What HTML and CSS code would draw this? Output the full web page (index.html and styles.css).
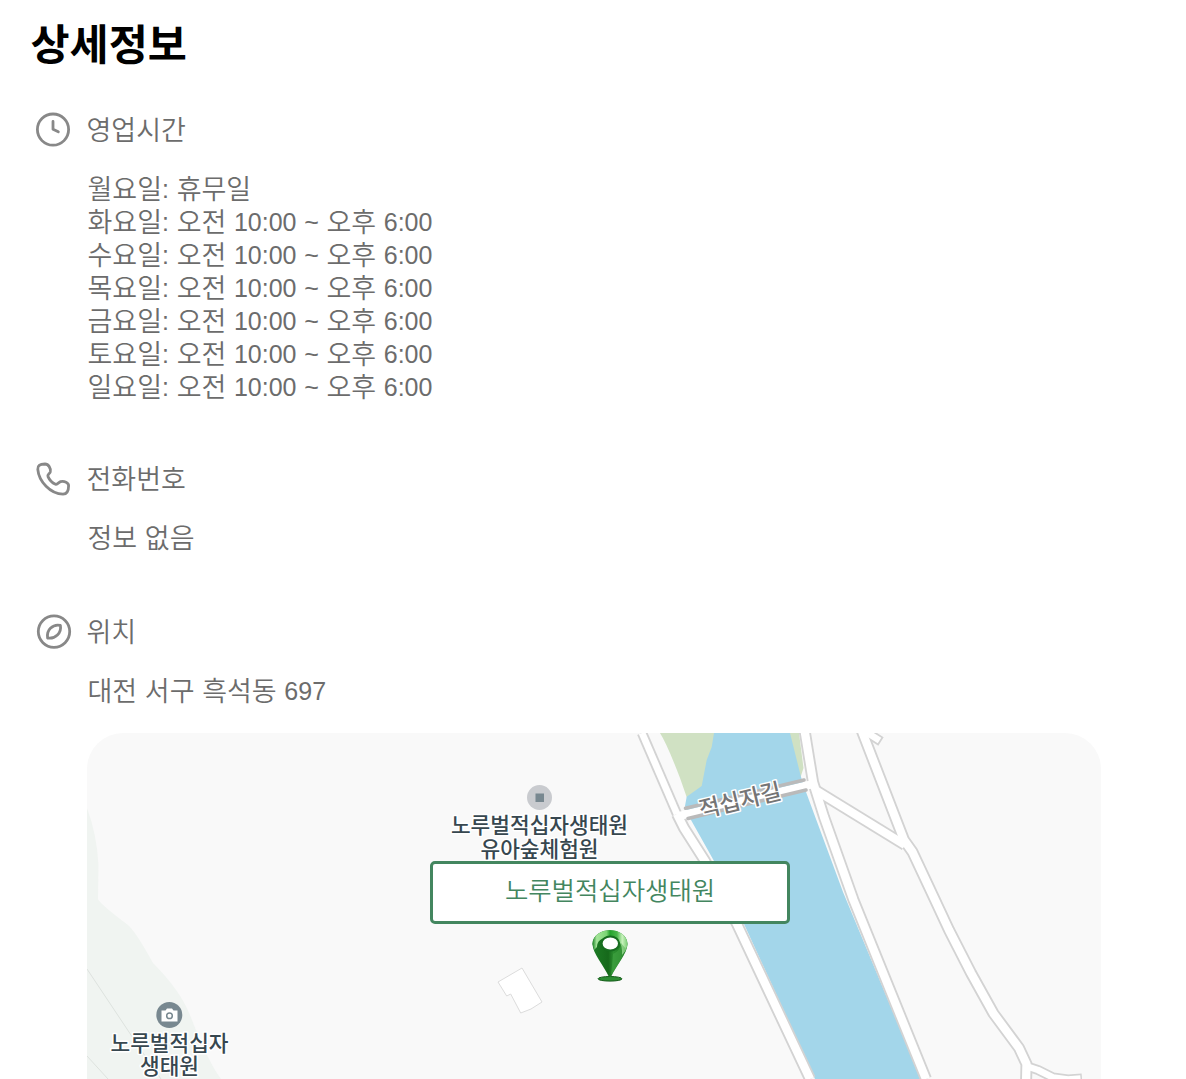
FILE: index.html
```html
<!DOCTYPE html>
<html lang="ko">
<head>
<meta charset="utf-8">
<title>상세정보</title>
<link rel="stylesheet" href="styles.css">
</head>
<body>
<main class="page">
  <h1 class="title">상세정보</h1>

  <section class="info info-hours">
    <header class="info-head">
      <svg class="icon" viewBox="0 0 38 38"><circle cx="19" cy="18.600" r="15.600"/><path d="M19 10.500v7.700l5.300 2.600"/></svg>
      <h2 class="label">영업시간</h2>
    </header>
    <ul class="lines">
      <li><b>월요일</b>: <b>휴무일</b></li>
      <li><b>화요일</b>: <b>오전</b> 10:00 ~ <b>오후</b> 6:00</li>
      <li><b>수요일</b>: <b>오전</b> 10:00 ~ <b>오후</b> 6:00</li>
      <li><b>목요일</b>: <b>오전</b> 10:00 ~ <b>오후</b> 6:00</li>
      <li><b>금요일</b>: <b>오전</b> 10:00 ~ <b>오후</b> 6:00</li>
      <li><b>토요일</b>: <b>오전</b> 10:00 ~ <b>오후</b> 6:00</li>
      <li><b>일요일</b>: <b>오전</b> 10:00 ~ <b>오후</b> 6:00</li>
    </ul>
  </section>

  <section class="info info-phone">
    <header class="info-head">
      <svg class="icon" viewBox="0 0 38 38"><path d="M3.800 9.400C3.500 5.600 5.500 4.200 11 4C14.500 4 17 8.400 16.300 11.800C15.600 14 13.200 14.200 14 16.600C15.500 20 18 22.700 21.500 24.200C23.800 25 24.300 22.300 26.500 21.600C30.500 20.800 34.600 22.500 34.600 25.700C34.600 31 33.300 34 29 34.200C16.500 34 4.800 21.500 3.800 9.400z"/></svg>
      <h2 class="label">전화번호</h2>
    </header>
    <p class="lines"><b>정보</b> <b>없음</b></p>
  </section>

  <section class="info info-place">
    <header class="info-head">
      <svg class="icon" viewBox="0 0 38 38"><circle cx="20" cy="18.600" r="15.700"/><path d="M13.600 25C13 21 14 17.500 16.400 15.200C19 12.700 22.800 11.500 26.400 12.400C27.100 16.200 26.100 19.300 23.400 21.900C20.900 24.300 17.500 25.700 13.600 25z"/></svg>
      <h2 class="label">위치</h2>
    </header>
    <p class="lines"><b>대전</b> <b>서구</b> <b>흑석동</b> 697</p>
    <div class="map">
      <svg class="map-art" viewBox="87 733 1014 346">
        <defs>
          <linearGradient id="pin" x1="0" x2="1"><stop offset="0" stop-color="#1d7c25"/><stop offset=".45" stop-color="#16691b"/><stop offset=".6" stop-color="#2c8f30"/><stop offset="1" stop-color="#15701c"/></linearGradient>
          <linearGradient id="rim" x1="0" x2="1"><stop offset="0" stop-color="#1b8324"/><stop offset=".12" stop-color="#a5e59a"/><stop offset=".4" stop-color="#7ad573"/><stop offset=".5" stop-color="#24a32c"/><stop offset=".7" stop-color="#48b549"/><stop offset=".85" stop-color="#c9f2bd"/><stop offset="1" stop-color="#79cd73"/></linearGradient>
        </defs>
        <path class="wood" d="M87 808Q97 835 98.500 865L98 899Q100 904 128 925Q136 932 153 963Q180 990 190 1015Q208 1062 221 1079H87z"/>
        <path class="trail" d="M87 969L143 1053L161 1079M87 1056L108 1079"/>
        <path class="grass" d="M660 733H716L703 787L687 798L680 778Q667 744 660 733zM788 733H799L803.500 768L800 779z"/>
        <path class="water" d="M714 733H790L801 777L806 792L843 892L863 940L921 1079H815L744 924L714 861L691 820L685 806L686.700 796.700L701.700 786L706.700 760L711.700 747z"/>
        <g class="casing">
          <path class="narrow" d="M642 733L677 814"/>
          <path d="M677 814L684 828L705 861L737 924L810 1079"/>
          <path d="M804.500 730L813 782L824 817L853.500 900L926 1079"/>
          <path d="M817 791L905 845"/>
          <path d="M861.500 730L904 840L912.500 852L935 900L949 930L971 973L993.500 1013.500L1019 1048L1026.500 1064L1026 1085"/>
          <path class="lane" d="M863 730L881 741.500M1026 1066L1038 1070L1053 1077.500L1068 1079.500L1082 1078.500"/>
        </g>
        <g class="surface">
          <path class="narrow" d="M642 733L677 814"/>
          <path d="M677 814L684 828L705 861L737 924L810 1079"/>
          <path d="M804.500 730L813 782L824 817L853.500 900L926 1079"/>
          <path d="M817 791L905 845"/>
          <path d="M861.500 730L904 840L912.500 852L935 900L949 930L971 973L993.500 1013.500L1019 1048L1026.500 1064L1026 1085"/>
          <path class="lane" d="M863 730L879.500 740.500M1026 1066L1038 1070L1053 1077.500L1068 1079.500L1080.500 1078.500"/>
          <path d="M677 816.500L811 784.500"/>
        </g>
        <path class="rail" d="M685.500 808.300L804 780M688 818.500L806 790"/>
        <text class="road-name" x="740" y="808.500" transform="rotate(-13.500 740 800)">적십자길</text>
        <path class="building" d="M522 968L498 982L506.700 996L510.700 994L520.700 1013L531 1009L542 1002z"/>
        <circle cx="539.500" cy="797.500" r="12.500" fill="#c9cbcf"/>
        <rect x="535.500" y="793.500" width="8.500" height="8.500" fill="#788890"/>
        <text class="poi" x="539.500" y="833">노루벌적십자생태원</text>
        <text class="poi" x="539.500" y="856.500">유아숲체험원</text>
        <circle cx="169.300" cy="1015" r="13" fill="#788890"/>
        <path d="M161.500 1010.500h4l1.500-2h5l1.500 2h4v11h-16z" fill="#fff"/>
        <circle cx="169.500" cy="1015.800" r="2.800" fill="#fff" stroke="#788890" stroke-width="1.500"/>
        <text class="poi" x="169.500" y="1050.500">노루벌적십자</text>
        <text class="poi" x="169.500" y="1074">생태원</text>
        <ellipse cx="610" cy="978.800" rx="12" ry="2.300" fill="#2d8d33" stroke="#145c19"/>
        <path d="M592.500 944C593 925.500 627 925.500 627.500 944C627.500 953 616 966 611 977H609C604 966 592.500 953 592.500 944z" fill="url(#pin)"/>
        <path d="M592.500 944C593 925.500 627 925.500 627.500 944Q627 950 622 955Q623 938 610 936.500Q597 938 597 947L594 950z" fill="url(#rim)"/>
        <path d="M613 954Q620 951 621 943L626 949Q621 961 611 975z" fill="#48a948" opacity=".5"/>
        <ellipse cx="610.300" cy="943.500" rx="8.700" ry="7" fill="#fff" stroke="#176d20" stroke-width="2"/>
      </svg>
      <div class="place-tag">노루벌적십자생태원</div>
    </div>
  </section>
</main>
</body>
</html>
```
FILE: styles.css
```css
* { box-sizing: border-box; margin: 0; padding: 0; }
body {
  height: 1079px;
  overflow: hidden;
  background: #fff;
  color: #6c6c6c;
  font: 25px/33px "Liberation Sans", "Noto Sans CJK KR", sans-serif;
}
.page { padding: 12px 0 0 30.500px; }
.title {
  height: 63px;
  font: 700 42.500px/60px "Noto Sans CJK KR", sans-serif;
  color: #000;
}
.info { display: flex; flex-direction: column; }
.info-hours { padding-top: 36px; }
.info-phone { padding-top: 56px; }
.info-place { padding-top: 58px; }
.info-head { display: flex; align-items: center; gap: 14.500px; height: 38px; margin-left: 3.500px; }
.icon {
  width: 38px;
  height: 38px;
  fill: none;
  stroke: #888;
  stroke-width: 2.800;
  stroke-linecap: round;
  stroke-linejoin: round;
}
.label, .lines b {
  font: 350 27px/33px "Noto Sans CJK KR", "Noto Sans CJK KR DemiLight", sans-serif;
}
.label { height: 33px; line-height: 30px; }
.lines { margin: 24px 0 0 57px; list-style: none; word-spacing: .7px; }
.lines li, p.lines { height: 33px; white-space: nowrap; }
.lines b { line-height: 1px; vertical-align: -1px; }
.map {
  position: relative;
  width: 1014px;
  height: 346px;
  margin: 25px 0 0 56.500px;
  overflow: hidden;
  border-radius: 36px 36px 0 0;
  background: #f9f9f9;
}
.map-art { display: block; width: 1014px; height: 346px; }
.wood { fill: #f0f4f1; }
.trail { fill: none; stroke: #dde2de; stroke-width: 1; }
.grass { fill: #d0e1c3; }
.water { fill: #a3d6ea; }
.casing, .surface { fill: none; stroke-linejoin: round; }
.casing { stroke: #d3d3d3; stroke-width: 12; }
.surface { stroke: #fff; stroke-width: 8.300; }
.casing .narrow { stroke-width: 10.500; }
.surface .narrow { stroke-width: 6.800; }
.casing .lane { stroke-width: 10; }
.surface .lane { stroke-width: 6.500; }
.rail { fill: none; stroke: #bababa; stroke-width: 3.500; stroke-linecap: round; }
.building { fill: #fff; stroke: #dcdcdc; }
.poi, .road-name {
  font: 500 21.400px "Noto Sans CJK KR", sans-serif;
  fill: #37474f;
  stroke: #fff;
  stroke-width: 3;
  stroke-linejoin: round;
  paint-order: stroke;
  text-anchor: middle;
}
.road-name { font-size: 22.800px; fill: #757575; }
.place-tag {
  position: absolute;
  left: 343px;
  top: 128px;
  width: 360px;
  height: 63px;
  border: 3px solid #43865f;
  border-radius: 5px;
  background: #fff;
  color: #43865f;
  font: 350 25.400px/51px "Noto Sans CJK KR", "Noto Sans CJK KR DemiLight", sans-serif;
  text-align: center;
}
```
